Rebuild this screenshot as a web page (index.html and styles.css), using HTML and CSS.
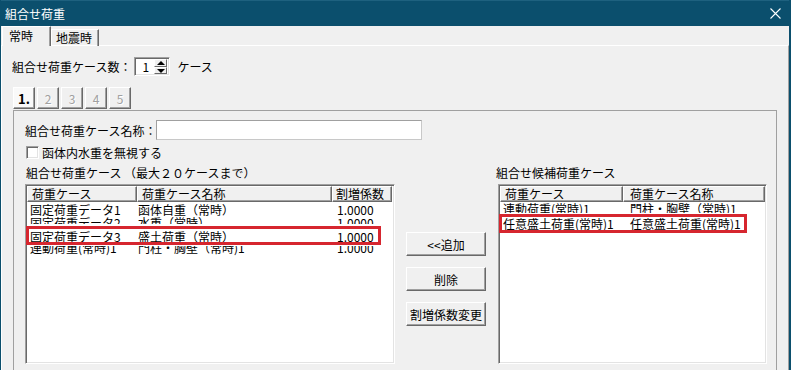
FILE: index.html
```html
<!DOCTYPE html>
<html lang="ja">
<head>
    <meta charset="UTF-8">
    <title>組合せ荷重</title>
    <link rel="stylesheet" href="styles.css">
</head>
<body>
    <div class="window">
        <div class="titlebar">
            <span class="title">組合せ荷重</span>
            <svg class="close" width="11" height="11" viewBox="0 0 11 11">
                <path d="M0.5 0.5 L10.5 10.5 M10.5 0.5 L0.5 10.5" stroke="#fff" stroke-width="1.1" fill="none"/>
            </svg>
        </div>

        <div class="client">
            <div class="tabs">
                <div class="tab active">常時</div>
                <div class="tab">地震時</div>
            </div>

            <div class="page">
                <div class="count-row">
                    <span>組合せ荷重ケース数：</span>
                    <div class="spin">
                        <span>1</span>
                        <div class="spin-btns">
                            <div class="spin-up"></div>
                            <div class="spin-down"></div>
                        </div>
                    </div>
                    <span class="unit">ケース</span>
                </div>

                <div class="subtabs">
                    <div class="subtab active">1.</div>
                    <div class="subtab">2</div>
                    <div class="subtab">3</div>
                    <div class="subtab">4</div>
                    <div class="subtab">5</div>
                </div>

                <div class="subpage">
                    <div class="name-row">
                        <span>組合せ荷重ケース名称：</span>
                        <div class="textbox"></div>
                    </div>

                    <div class="check-row">
                        <span class="checkbox"></span>
                        <span class="check-label">函体内水重を無視する</span>
                    </div>

                    <div class="lists">
                        <div class="left-col">
                            <div class="caption">組合せ荷重ケース （最大２０ケースまで）</div>
                            <div class="listview lv-left">
                                <div class="lv-head">
                                    <div class="c1">荷重ケース</div>
                                    <div class="c2">荷重ケース名称</div>
                                    <div class="c3">割増係数</div>
                                </div>
                                <div class="lv-body">
                                    <div class="lv-row r1">
                                        <div class="c1">固定荷重データ1</div>
                                        <div class="c2">函体自重（常時）</div>
                                        <div class="c3">1.0000</div>
                                    </div>
                                    <div class="lv-row r2">
                                        <div class="c1">固定荷重データ2</div>
                                        <div class="c2">水重（常時）</div>
                                        <div class="c3">1.0000</div>
                                    </div>
                                    <div class="lv-row r3">
                                        <div class="c1">固定荷重データ3</div>
                                        <div class="c2">盛土荷重（常時）</div>
                                        <div class="c3">1.0000</div>
                                    </div>
                                    <div class="lv-row r4">
                                        <div class="cells">
                                            <div class="c1">連動荷重(常時)1</div>
                                            <div class="c2">門柱・胸壁（常時)1</div>
                                            <div class="c3">1.0000</div>
                                        </div>
                                    </div>
                                </div>
                                <div class="mark mark-left"></div>
                            </div>
                        </div>

                        <div class="btn-col">
                            <button class="btn">&lt;&lt;追加</button>
                            <button class="btn">削除</button>
                            <button class="btn">割増係数変更</button>
                        </div>

                        <div class="right-col">
                            <div class="caption">組合せ候補荷重ケース</div>
                            <div class="listview lv-right">
                                <div class="lv-head">
                                    <div class="c1">荷重ケース</div>
                                    <div class="c2">荷重ケース名称</div>
                                </div>
                                <div class="lv-body">
                                    <div class="lv-row r1">
                                        <div class="c1">連動荷重(常時)1</div>
                                        <div class="c2">門柱・胸壁（常時)1</div>
                                    </div>
                                    <div class="lv-row r2">
                                        <div class="c1">任意盛土荷重(常時)1</div>
                                        <div class="c2">任意盛土荷重(常時)1</div>
                                    </div>
                                </div>
                                <div class="mark mark-right"></div>
                            </div>
                        </div>
                    </div>
                </div>
            </div>
        </div>
    </div>
</body>
</html>
```

FILE: styles.css
```css
body {
    margin: 0;
    font-family: "Noto Sans CJK JP", "Noto Sans", sans-serif;
    font-size: 12px;
    color: #000;
}

.window {
    width: 791px;
    height: 370px;
    overflow: hidden;
    box-sizing: border-box;
    padding: 0 2px 0 1px;
    background-color: #0b4f6d;
}

/* title bar */
.titlebar {
    height: 26px;
    box-sizing: border-box;
    border-top: 1px solid #1e617f;
    display: flex;
    align-items: center;
    justify-content: space-between;
    padding: 0 8px 1px 4px;
    color: #fff;
}

.title {
    font-size: 12px;
}

/* main tabs */
.client {
    height: 344px;
    background-color: #f0f0f0;
}

.tabs {
    display: flex;
    height: 19px;
    padding-left: 1px;
}

.tab {
    height: 16px;
    margin-top: 3px;
    padding: 0 6px 0 4px;
    line-height: 15px;
    border-top: 1px solid #fff;
    border-left: 1px solid #fff;
    border-right: 1px solid #696969;
    box-shadow: inset -1px 0 #a0a0a0;
}

.tab.active {
    position: relative;
    z-index: 1;
    height: 20px;
    margin-top: 0;
    padding: 0 17px 0 6px;
    line-height: 18px;
    box-sizing: border-box;
    background-color: #f0f0f0;
}

.page {
    height: 325px;
    box-sizing: border-box;
    border-top: 1px solid #fff;
    border-left: 1px solid #fff;
    border-right: 1px solid #a0a0a0;
    padding: 11px 0 0 10px;
}

/* case count */
.count-row {
    display: flex;
    align-items: center;
    height: 19px;
}

.spin {
    width: 36px;
    height: 19px;
    margin-left: 3px;
    box-sizing: border-box;
    border: 1px solid;
    border-color: #a0a0a0 #fff #fff #a0a0a0;
    box-shadow: inset 1px 1px #696969, inset -1px -1px #e3e3e3;
    background-color: #fff;
    display: flex;
    align-items: center;
    justify-content: space-between;
    padding: 0 2px 0 7px;
}

.spin-btns {
    width: 13px;
    height: 15px;
    display: flex;
    flex-direction: column;
}

.spin-up,
.spin-down {
    flex: 1;
    box-sizing: border-box;
    border: 1px solid;
    border-color: #fff #696969 #696969 #fff;
    background-color: #f0f0f0;
    position: relative;
}

.spin-up::after,
.spin-down::after {
    content: "";
    position: absolute;
    left: 2px;
    border-left: 4px solid transparent;
    border-right: 4px solid transparent;
}

.spin-up::after {
    top: 1px;
    border-bottom: 4px solid #000;
}

.spin-down::after {
    top: 1px;
    border-top: 4px solid #000;
}

.unit {
    margin-left: 7px;
}

/* sub tabs */
.subtabs {
    display: flex;
    align-items: flex-start;
    gap: 2px;
    height: 23px;
    margin: 11px 0 0 1px;
}

.subtab {
    width: 22px;
    height: 22px;
    box-sizing: border-box;
    border: 1px solid;
    border-color: #fff #696969 #696969 #fff;
    box-shadow: inset -1px -1px #a0a0a0;
    display: flex;
    align-items: center;
    justify-content: center;
    color: #a0a0a0;
    text-shadow: 1px 1px #fff;
}

.subtab.active {
    color: #000;
    font-weight: bold;
    font-size: 13px;
    text-shadow: none;
    background-color: #f9f9f9;
}

.subpage {
    width: 764px;
    height: 270px;
    margin-left: 1px;
    box-sizing: border-box;
    border: 1px solid #a0a0a0;
    border-bottom: none;
    padding: 9px 0 0 11px;
}

.name-row {
    display: flex;
    align-items: center;
    height: 20px;
}

.textbox {
    width: 266px;
    height: 20px;
    box-sizing: border-box;
    border: 1px solid #a0a0a0;
    border-right-color: #c8c8c8;
    border-bottom-color: #c8c8c8;
    background-color: #fff;
}

.check-row {
    display: flex;
    align-items: center;
    height: 13px;
    margin-top: 6px;
}

.checkbox {
    width: 13px;
    height: 13px;
    margin-left: 1px;
    box-sizing: border-box;
    border: 1px solid;
    border-color: #a0a0a0 #fff #fff #a0a0a0;
    box-shadow: inset 1px 1px #696969, inset -1px -1px #e3e3e3;
    background-color: #fff;
}

.check-label {
    margin-left: 3px;
}

/* lists */
.lists {
    display: flex;
    margin-top: 7px;
}

.left-col {
    width: 370px;
}

.right-col {
    width: 271px;
    margin-left: 10px;
}

.caption {
    height: 14px;
    line-height: 14px;
    margin: 0 0 4px 1px;
    white-space: nowrap;
}

.right-col .caption {
    margin-left: 0;
}

.listview {
    position: relative;
    height: 180px;
    box-sizing: border-box;
    border: 1px solid;
    border-color: #a0a0a0 #fff #fff #a0a0a0;
    box-shadow: inset 1px 1px #696969, inset -1px -1px #e3e3e3;
    background-color: #fff;
    padding: 1px;
}

.lv-right {
    width: 269px;
    margin-left: 2px;
}

.lv-head {
    display: flex;
    height: 16px;
}

.lv-head div {
    box-sizing: border-box;
    height: 16px;
    line-height: 14px;
    padding-left: 4px;
    border-top: 1px solid #fff;
    border-left: 1px solid #fff;
    border-right: 1px solid #696969;
    border-bottom: 1px solid #696969;
    box-shadow: inset -1px -1px #a0a0a0;
    background-color: #f0f0f0;
    white-space: nowrap;
    overflow: hidden;
}

.lv-left .c1 { width: 110px; }
.lv-left .c2 { width: 195px; }
.lv-left .c3 { width: 60px; }
.lv-right .c1 { width: 123px; }
.lv-right .c2 { width: 142px; }

.lv-left .lv-head .c3 { padding-left: 3px; }
.lv-right .lv-head .c2 { padding-left: 6px; }

.lv-row,
.lv-row .cells {
    display: flex;
    line-height: 13px;
    white-space: nowrap;
}

.lv-row {
    height: 13px;
    overflow: hidden;
}

.lv-row div div,
.lv-row > div {
    box-sizing: border-box;
}

.lv-row .c1 { padding-left: 3px; }
.lv-left .lv-row .c2 { padding-left: 1px; }
.lv-left .lv-row .c3 { padding-left: 5px; }
.lv-right .lv-row .c2 { padding-left: 7px; }

/* rows drawn over each other, as in the original control */
.lv-left .lv-body { padding-top: 1px; }
.lv-left .r2 { height: 8px; }
.lv-left .r3 { height: 22px; padding-top: 6px; box-sizing: border-box; }
.lv-left .r4 { height: 10px; }
.lv-left .r4 .cells { margin-top: -5px; }

.lv-right .r1 { height: 11px; }
.lv-right .r2 { height: 21px; padding-top: 4px; box-sizing: border-box; }

/* red highlight boxes */
.mark {
    position: absolute;
    box-sizing: border-box;
    border: 3px solid #d6262f;
}

.mark-left {
    left: 0;
    top: 41px;
    width: 355px;
    height: 19px;
}

.mark-right {
    left: 0;
    top: 29px;
    width: 248px;
    height: 19px;
}

/* buttons */
.btn-col {
    width: 80px;
    margin-left: 11px;
    padding-top: 66px;
    display: flex;
    flex-direction: column;
    gap: 11px;
}

.btn {
    height: 24px;
    padding: 0;
    box-sizing: border-box;
    border: 1px solid;
    border-color: #fff #696969 #696969 #fff;
    box-shadow: inset -1px -1px #a0a0a0;
    background-color: #f0f0f0;
    font: inherit;
    color: #000;
}
```
